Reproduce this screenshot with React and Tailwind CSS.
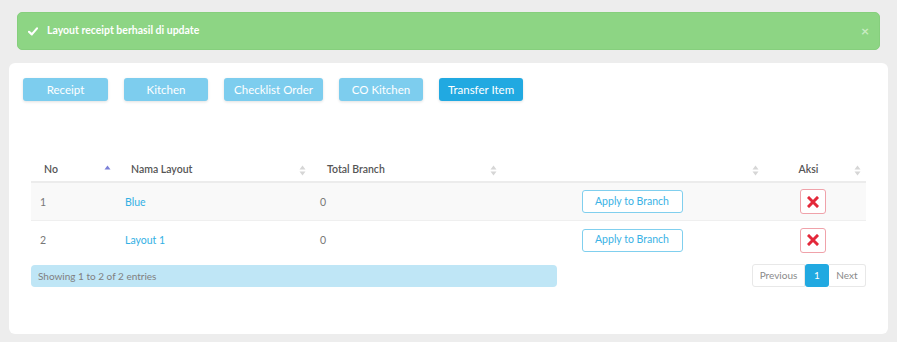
import React from "react";

const font = { fontFamily: "Lato, 'Open Sans', sans-serif" };

function SortIcon({ active }) {
  return (
    <svg width="7" height="11" viewBox="0 0 7 11" className="shrink-0">
      <path d="M3.5 0.5 L6.5 4.5 L0.5 4.5 Z" fill={active ? "#7b80d8" : "#d6d6d6"} />
      {!active && <path d="M3.5 10.5 L6.5 6.5 L0.5 6.5 Z" fill="#d6d6d6" />}
    </svg>
  );
}

function XIcon() {
  return (
    <svg width="12" height="12" viewBox="0 0 12 12">
      <path d="M2 2 L10 10 M10 2 L2 10" stroke="#e3283a" strokeWidth="3" strokeLinecap="square" />
    </svg>
  );
}

const rows = [
  { no: "1", name: "Blue", total: "0" },
  { no: "2", name: "Layout 1", total: "0" },
];

export default function App() {
  return (
    <div className="min-h-[342px] w-[897px] bg-[#ededed] pt-[12px] pb-[8px]" style={font}>
      <div className="mx-[17px] h-[38px] rounded-[5px] border border-[#86cf7d] bg-[#8dd584] flex items-center pl-[10px] pr-[10px]">
        <svg width="10" height="9" viewBox="0 0 10 9" className="mr-[9px]">
          <path d="M1 4.8 L3.8 7.4 L9 1.4" stroke="#ffffff" strokeWidth="2.2" fill="none" strokeLinecap="round" strokeLinejoin="round" />
        </svg>
        <span className="text-[10.5px] font-bold text-white">Layout receipt berhasil di update</span>
        <span className="ml-auto text-[14px] leading-none text-[#c8ecc2] font-bold">×</span>
      </div>

      <div className="mx-[9px] mt-[13px] h-[271px] rounded-[6px] bg-white pt-[15px] px-[14px]">
        <div className="flex gap-[16px]">
          {[
            ["Receipt", "w-[85px]", false],
            ["Kitchen", "w-[84px]", false],
            ["Checklist Order", "w-[99px]", false],
            ["CO Kitchen", "w-[84px]", false],
            ["Transfer Item", "w-[84px]", true],
          ].map(([label, w, active]) => (
            <div
              key={label}
              className={`${w} h-[23px] rounded-[3px] flex items-center justify-center text-[11.5px] text-white shadow-[0_1px_3px_rgba(0,0,0,0.12)] ${active ? "bg-[#21a9e1]" : "bg-[#7dcdee]"}`}
            >
              {label}
            </div>
          ))}
        </div>

        <div className="ml-[8px] mr-[8px] mt-[55px]">
          <div className="grid grid-cols-[86px_195px_191px_258px_105px] h-[27px] items-center pt-[3px] border-b-2 border-[#ececec] text-[10.5px] font-semibold text-[#555555]">
            <div className="flex items-center pl-[13px] pr-[6px]">
              <span>No</span>
              <span className="ml-auto"><SortIcon active /></span>
            </div>
            <div className="flex items-center pl-[14px] pr-[6px]">
              <span>Nama Layout</span>
              <span className="ml-auto"><SortIcon /></span>
            </div>
            <div className="flex items-center pl-[15px] pr-[6px]">
              <span>Total Branch</span>
              <span className="ml-auto"><SortIcon /></span>
            </div>
            <div className="flex items-center pr-[2px]">
              <span className="ml-auto"><SortIcon /></span>
            </div>
            <div className="flex items-center pr-[5px]">
              <span className="flex-1 text-center pl-[2px]">Aksi</span>
              <SortIcon />
            </div>
          </div>
          {rows.map((r, i) => (
            <div
              key={r.no}
              className={`grid grid-cols-[86px_195px_191px_258px_105px] h-[38px] items-center text-[10.5px] text-[#777777] ${i === 0 ? "bg-[#f9f9f9] border-b border-[#efefef]" : ""}`}
            >
              <div className="pl-[9px] pt-[2px]">{r.no}</div>
              <div className="pl-[8px] pt-[2px] text-[#33b0e4]">{r.name}</div>
              <div className="pl-[8px] pt-[2px]">{r.total}</div>
              <div className="flex justify-center">
                <div className="w-[101px] h-[23px] border border-[#80cfee] rounded-[3px] bg-white flex items-center justify-center text-[10.5px] text-[#3ab2e5]">
                  Apply to Branch
                </div>
              </div>
              <div className="flex justify-center pr-[1px]">
                <div className="w-[26px] h-[25px] border border-[#f0a2aa] rounded-[3px] bg-white flex items-center justify-center">
                  <XIcon />
                </div>
              </div>
            </div>
          ))}

          <div className="flex items-start mt-[5px]">
            <div className="w-[526px] h-[22px] mt-[1px] rounded-[4px] bg-[#bfe6f6] flex items-center pl-[7px] text-[10px] text-[#7f7f7f]">
              Showing 1 to 2 of 2 entries
            </div>
            <div className="ml-auto flex h-[23px] text-[10px]">
              <div className="w-[53px] border border-[#e8e8e8] rounded-l-[3px] flex items-center justify-center text-[#8a8a8a]">Previous</div>
              <div className="w-[24px] bg-[#21a9e1] rounded-[3px] flex items-center justify-center text-white">1</div>
              <div className="w-[37px] border border-[#e8e8e8] border-l-0 rounded-r-[3px] flex items-center justify-center text-[#8a8a8a]">Next</div>
            </div>
          </div>
        </div>
      </div>
    </div>
  );
}
